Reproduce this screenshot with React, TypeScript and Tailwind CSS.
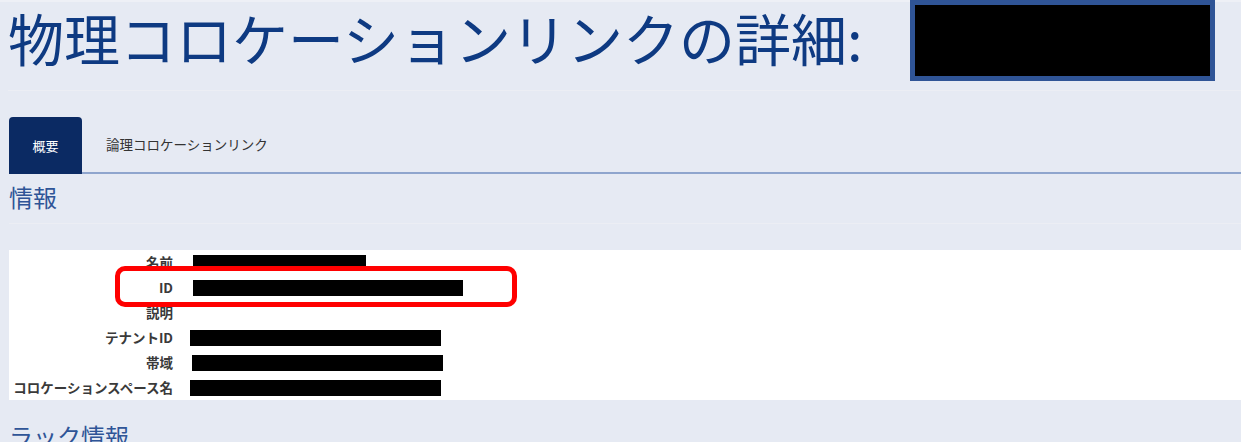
const rows = [
  { label: '名前', bar: { ml: 'ml-[20px]', w: 'w-[173px]' } },
  { label: 'ID', bar: { ml: 'ml-[20px]', w: 'w-[270px]' } },
  { label: '説明', bar: null },
  { label: 'テナントID', bar: { ml: 'ml-[17px]', w: 'w-[251px]' } },
  { label: '帯域', bar: { ml: 'ml-[19px]', w: 'w-[251px]' } },
  { label: 'コロケーションスペース名', bar: { ml: 'ml-[17px]', w: 'w-[251px]' } },
];

export default function App() {
  return (
    <div
      className="w-[1241px] h-[442px] overflow-hidden bg-[#e6eaf3] text-[#333]"
      style={{ fontFamily: '"Noto Sans CJK JP", "Noto Sans", sans-serif' }}
    >
      {/* Header */}
      <div className="h-[2px] bg-[#eef0f6]" />
      <div className="ml-[8px] h-[89px] border-b border-[#eceef4] flex items-start">
        <h1 className="w-[902px] text-[56px] leading-[76px] -mt-[3px] text-[#0e3a82] whitespace-nowrap">
          物理コロケーションリンクの詳細:
        </h1>
        <div className="-mt-[2px] w-[305px] h-[81px] bg-black border-[5px] border-[#2f5496]" />
      </div>

      {/* Tabs */}
      <div className="ml-[9px] mt-[26px] flex items-end border-b-2 border-[#8fa5cd]">
        <div className="w-[73px] h-[57px] -mb-[2px] rounded-t-[4px] bg-[#0b2a63] text-white text-[13px] flex items-center justify-center">
          概要
        </div>
        <div className="h-[55px] pl-[24px] text-[13.5px] text-[#333] flex items-center">
          論理コロケーションリンク
        </div>
      </div>

      {/* 情報 */}
      <div className="ml-[9px] h-[50px] border-b border-[#eceef4] flex items-center">
        <h2 className="text-[24px] leading-none text-[#2f5597] -mt-[3px]">情報</h2>
      </div>

      <div className="relative ml-[9px] mt-[26px] bg-white">
        {rows.map((row) => (
          <div key={row.label} className="h-[25px] flex items-center">
            <div className="w-[164px] text-right text-[13.5px] font-bold text-[#3a3a3a] whitespace-nowrap">
              {row.label}
            </div>
            {row.bar && <div className={`${row.bar.ml} ${row.bar.w} h-[16px] bg-black`} />}
          </div>
        ))}
        <div className="absolute left-[106px] top-[16px] w-[402px] h-[41px] border-[5px] border-[#ff0000] rounded-[10px]" />
      </div>

      {/* ラック情報 */}
      <div className="ml-[9px] mt-[12px] h-[50px] flex items-center">
        <h2 className="text-[24px] leading-none text-[#2f5597] -mt-[3px]">ラック情報</h2>
      </div>
    </div>
  );
}
